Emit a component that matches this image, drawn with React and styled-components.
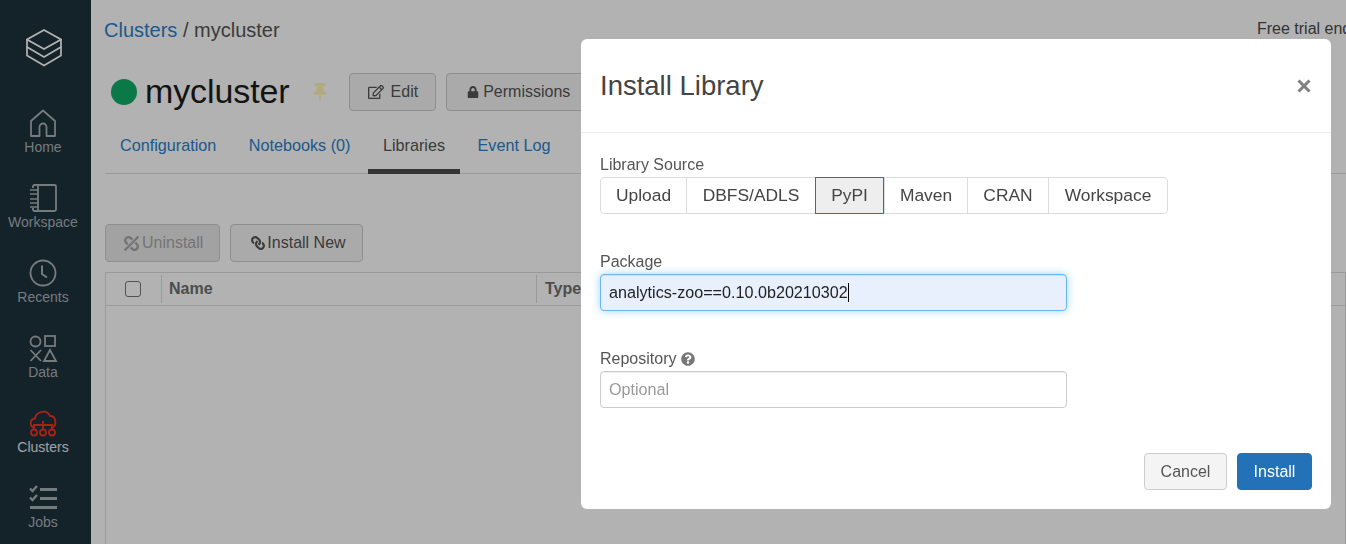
import React from "react";
import styled, { createGlobalStyle } from "styled-components";
import { FaRegEdit, FaLock, FaLink, FaUnlink, FaThumbtack, FaQuestionCircle } from "react-icons/fa";

const GlobalStyle = createGlobalStyle`
  html, body {
    margin: 0;
    height: 100%;
    overflow: hidden;
    background: #fff;
    font-family: "Liberation Sans", Arial, sans-serif;
  }
  * { box-sizing: border-box; }
`;

const Page = styled.div`
  display: flex;
  width: 1346px;
  height: 544px;
  overflow: hidden;
`;

const Sidebar = styled.nav`
  flex: 0 0 91px;
  padding-right: 5px;
  background: #1e323d;
  display: flex;
  flex-direction: column;
  align-items: center;
`;

const LogoSlot = styled.div`
  flex: none;
  height: 103px;
  padding: 29px 0 0 1px;
  color: #fff;
`;

const NavItem = styled.a`
  flex: none;
  height: 75px;
  width: 100%;
  display: flex;
  flex-direction: column;
  align-items: center;
  color: ${(p) => (p.$active ? "#e6e9eb" : "#a9b0b5")};
  font-size: 14px;
  line-height: 16px;
`;

const NavIcon = styled.svg`
  flex: none;
  width: 32px;
  height: 32px;
  margin: 4px 0 0;
  fill: none;
  stroke: ${(p) => (p.$active ? "#f0341f" : "#a9b0b5")};
  stroke-width: 1.8;
`;

const Main = styled.main`
  flex: 1;
  min-width: 0;
  padding: 17px 0 0 14px;
  overflow: hidden;
`;

const TopRow = styled.div`
  display: grid;
  grid-template-columns: 1152px max-content;
  align-items: start;
  height: 38px;
`;

const Breadcrumb = styled.div`
  margin-left: -1px;
  font-size: 20px;
  line-height: 26px;
  color: #555;
  white-space: nowrap;
`;

const Crumb = styled.a`
  color: #2a80cc;
`;

const TrialNote = styled.div`
  padding-top: 1px;
  font-size: 16px;
  line-height: 22px;
  color: #4a4a4a;
  white-space: nowrap;
`;

const TitleRow = styled.div`
  display: flex;
  align-items: center;
  height: 38px;
  margin-top: 18px;
  padding-left: 6px;
`;

const StatusDot = styled.span`
  width: 26px;
  height: 26px;
  border-radius: 50%;
  background: #10ae66;
  margin-right: 8px;
`;

const ClusterName = styled.h1`
  margin: 0 23px 0 0;
  padding-bottom: 3px;
  font-size: 34px;
  font-weight: 400;
  line-height: 38px;
  letter-spacing: -0.1px;
  color: #1c1c1c;
`;

const Pin = styled(FaThumbtack)`
  width: 14px;
  height: 17px;
  margin: 0 22px 0 0;
  color: #fff5b8;
  position: relative;
  top: -1px;
`;

const Button = styled.button`
  height: 38px;
  padding: 0 ${(p) => p.$right ?? 16}px 0 ${(p) => p.$left ?? 18}px;
  border: 1px solid #ccc;
  border-radius: 4px;
  background: ${(p) => (p.$disabled ? "#e9e9e9" : "#f4f4f4")};
  color: ${(p) => (p.$disabled ? "#a6a6a6" : "#555")};
  font: 16px "Liberation Sans", Arial, sans-serif;
  display: inline-flex;
  align-items: center;
  gap: ${(p) => p.$gap ?? 4}px;
  white-space: nowrap;
  flex: none;
  svg { flex: none; }
`;

const TitleButtons = styled.div`
  display: flex;
  gap: 10px;
`;

const FlippedLink = styled(FaLink)`
  transform: scaleX(-1);
`;

const FlippedUnlink = styled(FaUnlink)`
  transform: scaleX(-1);
`;

const Tabs = styled.div`
  display: flex;
  gap: 2.5px;
  height: 45px;
  margin-top: 18px;
  border-bottom: 1px solid #ddd;
`;

const Tab = styled.a`
  height: 45px;
  padding: 5px 15px 0;
  font-size: 16.2px;
  line-height: 22px;
  color: ${(p) => (p.$active ? "#555" : "#2a80cc")};
  border-bottom: ${(p) => (p.$active ? "5px solid #4c4c4c" : "none")};
`;

const ActionRow = styled.div`
  display: flex;
  gap: 10px;
  margin-top: 50px;
`;

const Table = styled.div`
  margin-top: 10px;
  height: 400px;
  border: 1px solid #ddd;
`;

const TableHead = styled.div`
  display: grid;
  grid-template-columns: 56px 375px 1fr;
  align-items: center;
  height: 33px;
  border-bottom: 1px solid #ddd;
  font-size: 16px;
  font-weight: 700;
  color: #6f6f6f;
`;

const HeadCell = styled.div`
  height: 28px;
  display: flex;
  align-items: center;
  padding-left: ${(p) => p.$pad ?? 7}px;
  border-right: ${(p) => (p.$last ? "none" : "1px solid #ddd")};
`;

const Check = styled.span`
  width: 16px;
  height: 16px;
  border: 1px solid #777;
  border-radius: 3px;
  background: #fff;
`;

const Backdrop = styled.div`
  position: fixed;
  inset: 0;
  background: rgba(0, 0, 0, 0.3);
`;

const Modal = styled.section`
  position: fixed;
  top: 39px;
  left: 581px;
  width: 750px;
  height: 470px;
  border-radius: 6px;
  background: #fff;
  display: flex;
  flex-direction: column;
`;

const ModalHeader = styled.header`
  flex: 0 0 94px;
  display: flex;
  align-items: center;
  justify-content: space-between;
  padding: 0 19px;
  border-bottom: 1px solid #eee;
`;

const ModalTitle = styled.h2`
  margin: 0;
  padding-top: 1px;
  font-size: 27.5px;
  font-weight: 400;
  color: #444;
`;

const CloseIcon = styled.svg`
  width: 14px;
  height: 14px;
  margin-right: 1px;
  stroke: #808080;
  stroke-width: 3;
`;

const ModalBody = styled.div`
  flex: 1;
  padding: 21px 19px 0;
`;

const Label = styled.label`
  display: flex;
  align-items: center;
  gap: 5px;
  height: 22px;
  margin-bottom: 1px;
  font-size: 16px;
  color: #555;
`;

const Segments = styled.div`
  display: inline-flex;
  height: 37px;
  margin-bottom: 37px;
  border: 1px solid #ddd;
  border-radius: 4px;
`;

const Segment = styled.span`
  display: flex;
  align-items: center;
  justify-content: center;
  width: ${(p) => p.$w}px;
  margin: ${(p) => (p.$active ? "-1px 0" : "0")};
  font-size: 17.4px;
  color: #444;
  border-left: ${(p) => (p.$first || p.$active ? "none" : "1px solid #ddd")};
  ${(p) => p.$active && "border: 1px solid #2372b8; background: #eee;"}
`;

const Field = styled.div`
  width: 467px;
  height: 37px;
  margin-bottom: ${(p) => p.$mb ?? 0}px;
  padding: 0 8px;
  display: flex;
  align-items: center;
  border-radius: 4px;
  font-size: 16.15px;
  border: 1px solid ${(p) => (p.$focus ? "#66b8f2" : "#ccc")};
  background: ${(p) => (p.$focus ? "#e8f0fe" : "#fff")};
  color: ${(p) => (p.$focus ? "#222" : "#999")};
  box-shadow: ${(p) =>
    p.$focus
      ? "inset 0 1px 1px rgba(0,0,0,.075), 0 0 8px rgba(102,184,242,.6)"
      : "inset 0 1px 1px rgba(0,0,0,.075)"};
`;

const Caret = styled.span`
  width: 1px;
  height: 19px;
  background: #000;
`;

const HelpIcon = styled(FaQuestionCircle)`
  width: 14px;
  height: 14px;
  color: #777;
`;

const ModalFooter = styled.footer`
  flex: 0 0 auto;
  display: flex;
  justify-content: flex-end;
  gap: 10px;
  padding: 0 19px 19px;
`;

const FooterButton = styled.button`
  height: 37px;
  width: ${(p) => p.$w}px;
  padding: 0;
  border-radius: 4px;
  border: 1px solid ${(p) => (p.$primary ? "#2372b8" : "#ccc")};
  background: ${(p) => (p.$primary ? "#2372b8" : "#f4f4f4")};
  color: ${(p) => (p.$primary ? "#fff" : "#555")};
  font: 16px "Liberation Sans", Arial, sans-serif;
`;

const segments = [
  ["Upload", 85],
  ["DBFS/ADLS", 129],
  ["PyPI", 69],
  ["Maven", 83],
  ["CRAN", 81],
  ["Workspace", 119],
];

const navItems = [
  {
    label: "Home",
    icon: <path d="M16 3.500 28 14v15h-8.500V20a3.500 3.500 0 0 0-7 0v9H4V14z" strokeLinejoin="round" />,
  },
  {
    label: "Workspace",
    icon: (
      <>
        <path d="M6 6V4.500A1.500 1.500 0 0 1 7.500 3h20A1.500 1.500 0 0 1 29 4.500v23a1.500 1.500 0 0 1-1.500 1.500h-20A1.500 1.500 0 0 1 6 27.500V26" />
        <path d="M11 3v26" />
        <path d="M3 8h8M3 12h8M3 17h8M3 21h8M3 25h8" strokeWidth="1.600" />
      </>
    ),
  },
  {
    label: "Recents",
    icon: (
      <>
        <circle cx="16" cy="16" r="12.500" />
        <path d="M15 8.500V17l5 3.500" strokeWidth="2" />
      </>
    ),
  },
  {
    label: "Data",
    icon: (
      <>
        <circle cx="8.500" cy="9.500" r="5" />
        <rect x="18" y="4" width="10" height="10" />
        <path d="M3.500 18 14 29M14 18 3.500 29M23 18l6 11H17z" />
      </>
    ),
  },
  {
    label: "Clusters",
    active: true,
    icon: (
      <>
        <path d="M7 20.500c-4.500-1-4.500-8.500 1-9 1-7.500 12-9.500 15-2.500 6-.5 7.500 9.500 2 11.500" />
        <path d="M16 14v8.500M7 22.500v-4.500h18v4.500" />
        <circle cx="7" cy="25.500" r="3" />
        <circle cx="16" cy="25.500" r="3" />
        <circle cx="25" cy="25.500" r="3" />
      </>
    ),
  },
  {
    label: "Jobs",
    icon: (
      <>
        <path d="M13 7.500h17M13 16.500h17M3 25.500h27" strokeWidth="2.800" />
        <path d="M3 6.500 5.500 9 10 4M3 15.500 5.500 18l4.500-5" strokeWidth="2.400" />
      </>
    ),
  },
];

export default function App() {
  return (
    <>
      <GlobalStyle />
      <Page>
        <Sidebar>
          <LogoSlot>
            <svg width="36" height="38" viewBox="0 0 36 38" fill="none" stroke="currentColor" strokeWidth="1.700">
              <path d="M18 1 35 10.500 18 20 1 10.500z" />
              <path d="M1 10.500V18l17 10 17-10v-7.500" />
              <path d="M1 18v8.500l17 10 17-10V18" />
            </svg>
          </LogoSlot>
          {navItems.map((item) => (
            <NavItem key={item.label} $active={item.active}>
              <NavIcon viewBox="0 0 32 32" $active={item.active}>{item.icon}</NavIcon>
              {item.label}
            </NavItem>
          ))}
        </Sidebar>

        <Main>
          <TopRow>
            <Breadcrumb>
              <Crumb>Clusters</Crumb> / mycluster
            </Breadcrumb>
            <TrialNote>Free trial ends in 14 days</TrialNote>
          </TopRow>

          <TitleRow>
            <StatusDot />
            <ClusterName>mycluster</ClusterName>
            <Pin />
            <TitleButtons>
              <Button $left={18} $right={17} $gap={7}>
                <FaRegEdit size={16} /> Edit
              </Button>
              <Button $left={20} $right={20} $gap={4}>
                <FaLock size={12} /> Permissions
              </Button>
            </TitleButtons>
          </TitleRow>

          <Tabs>
            <Tab>Configuration</Tab>
            <Tab>Notebooks (0)</Tab>
            <Tab $active>Libraries</Tab>
            <Tab>Event Log</Tab>
          </Tabs>

          <ActionRow>
            <Button $disabled $left={18} $right={16} $gap={3}>
              <FlippedUnlink size={15} /> Uninstall
            </Button>
            <Button $left={20} $right={16} $gap={2}>
              <FlippedLink size={14} /> Install New
            </Button>
          </ActionRow>

          <Table>
            <TableHead>
              <HeadCell $pad={19}>
                <Check />
              </HeadCell>
              <HeadCell>Name</HeadCell>
              <HeadCell $last $pad={8}>Type</HeadCell>
            </TableHead>
          </Table>
        </Main>
      </Page>

      <Backdrop />

      <Modal>
        <ModalHeader>
          <ModalTitle>Install Library</ModalTitle>
          <CloseIcon viewBox="0 0 14 14">
            <path d="M1.500 1.500l11 11M12.500 1.500l-11 11" />
          </CloseIcon>
        </ModalHeader>
        <ModalBody>
          <Label>Library Source</Label>
          <Segments>
            {segments.map(([name, w], i) => (
              <Segment key={name} $w={w} $first={i === 0} $active={name === "PyPI"}>
                {name}
              </Segment>
            ))}
          </Segments>
          <Label>Package</Label>
          <Field $focus $mb={37}>
            analytics-zoo==0.10.0b20210302
            <Caret />
          </Field>
          <Label>
            Repository <HelpIcon />
          </Label>
          <Field>Optional</Field>
        </ModalBody>
        <ModalFooter>
          <FooterButton $w={83}>Cancel</FooterButton>
          <FooterButton $w={75} $primary>Install</FooterButton>
        </ModalFooter>
      </Modal>
    </>
  );
}
